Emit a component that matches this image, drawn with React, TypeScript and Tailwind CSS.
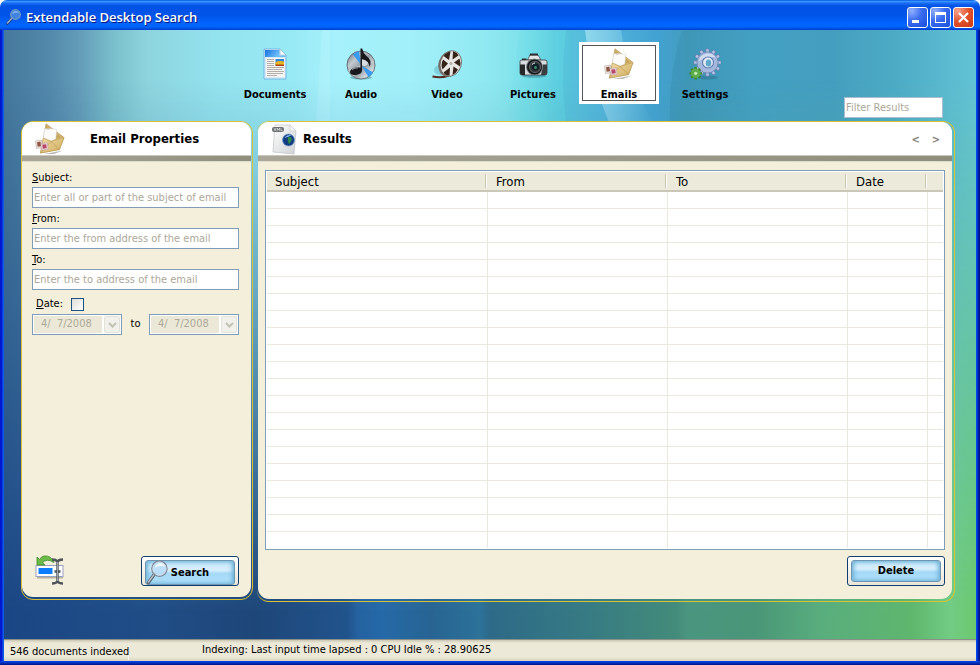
import type { ReactNode } from "react";

function Backdrop() {
  return (
    <svg
      className="col-start-1 row-start-1 h-full w-full"
      viewBox="4 30 972 609"
      preserveAspectRatio="none"
      aria-hidden="true"
    >
      <defs>
        <linearGradient id="sky" gradientUnits="userSpaceOnUse" x1="0" y1="0" x2="980" y2="0">
          <stop offset="0.004" stopColor="#45789c" />
          <stop offset="0.05" stopColor="#5389ab" />
          <stop offset="0.08" stopColor="#629bb8" />
          <stop offset="0.115" stopColor="#79bfcb" />
          <stop offset="0.15" stopColor="#8dd4de" />
          <stop offset="0.22" stopColor="#93e3ee" />
          <stop offset="0.3" stopColor="#98eaf5" />
          <stop offset="0.34" stopColor="#a6f1fb" />
          <stop offset="0.42" stopColor="#a2f0f9" />
          <stop offset="0.5" stopColor="#8fe8f1" />
          <stop offset="0.545" stopColor="#78dfe8" />
          <stop offset="0.575" stopColor="#58c4dc" />
          <stop offset="0.62" stopColor="#52b3dc" />
          <stop offset="0.67" stopColor="#42a2d2" />
          <stop offset="0.7" stopColor="#459dbd" />
          <stop offset="0.77" stopColor="#47a5c8" />
          <stop offset="0.85" stopColor="#459fc0" />
          <stop offset="0.91" stopColor="#4caac5" />
          <stop offset="0.995" stopColor="#62c2d5" />
        </linearGradient>
        <linearGradient id="ground" gradientUnits="userSpaceOnUse" x1="0" y1="0" x2="980" y2="0">
          <stop offset="0" stopColor="#1b4685" />
          <stop offset="0.16" stopColor="#204d86" />
          <stop offset="0.26" stopColor="#1e4679" />
          <stop offset="0.355" stopColor="#21548c" />
          <stop offset="0.365" stopColor="#2562a0" />
          <stop offset="0.39" stopColor="#2569a8" />
          <stop offset="0.44" stopColor="#276493" />
          <stop offset="0.49" stopColor="#2c7299" />
          <stop offset="0.5" stopColor="#2d6a88" />
          <stop offset="0.6" stopColor="#377b83" />
          <stop offset="0.69" stopColor="#438b7a" />
          <stop offset="0.7" stopColor="#4a957f" />
          <stop offset="0.77" stopColor="#4a9678" />
          <stop offset="0.84" stopColor="#59ae7d" />
          <stop offset="0.93" stopColor="#5fb66d" />
          <stop offset="0.97" stopColor="#72cc83" />
          <stop offset="1" stopColor="#6ac76b" />
        </linearGradient>
        <linearGradient id="fade" x1="0" y1="0" x2="0" y2="1">
          <stop offset="0.12" stopColor="#000" />
          <stop offset="0.45" stopColor="#666" />
          <stop offset="0.92" stopColor="#fff" />
        </linearGradient>
        <linearGradient id="ray" x1="0" y1="0" x2="1" y2="0">
          <stop offset="0" stopColor="#d8fbff" stopOpacity="0.45" />
          <stop offset="1" stopColor="#d8fbff" stopOpacity="0" />
        </linearGradient>
        <linearGradient id="edge" x1="0" y1="0" x2="1" y2="0">
          <stop offset="0" stopColor="#5ed4e2" stopOpacity="0" />
          <stop offset="1" stopColor="#5ed4e2" stopOpacity="0.6" />
        </linearGradient>
        <linearGradient id="shade" x1="0" y1="0" x2="1" y2="0">
          <stop offset="0" stopColor="#2f85a8" stopOpacity="0.3" />
          <stop offset="1" stopColor="#2f85a8" stopOpacity="0" />
        </linearGradient>
        <mask id="lower" maskUnits="userSpaceOnUse" x="0" y="0" width="980" height="665">
          <rect width="980" height="665" fill="url(#fade)" />
        </mask>
      </defs>
      <rect width="980" height="665" fill="url(#sky)" />
      <path d="M322 30h8v92h-14z" fill="#c8f8ff" opacity="0.25" />
      <path d="M520 30h46q-6 46 0 92h-60z" fill="url(#edge)" />
      <path d="M585 30q6 50 24 92h44q-24-40-32-92z" fill="url(#ray)" />
      <path d="M682 30q-14 44-12 92h190V30z" fill="url(#shade)" />
      <rect width="980" height="665" fill="url(#ground)" mask="url(#lower)" />
    </svg>
  );
}

function MagnifierIcon({ className }: { className: string }) {
  return (
    <svg className={className} viewBox="0 0 24 26" aria-hidden="true">
      <path d="M2.500 23.500 9 14.500" stroke="#5b6470" strokeWidth="3.400" strokeLinecap="round" />
      <path d="M2.500 23 8.500 15" stroke="#c3c9d2" strokeWidth="1.400" strokeLinecap="round" />
      <circle cx="14" cy="9" r="7.800" fill="#b8dcf8" fillOpacity="0.85" stroke="#7b8796" strokeWidth="1.600" />
      <path d="M9 8q1-4 5-5 5 0 6 4-6-2-11 1" fill="#eef8ff" />
      <circle cx="14" cy="9" r="7" fill="none" stroke="#dfe8f2" strokeWidth="0.800" />
    </svg>
  );
}

function TitleGlass() {
  return (
    <svg className="size-4" viewBox="0 0 16 16" aria-hidden="true">
      <path d="M1.500 14.500 6.500 8.500" stroke="#15317c" strokeWidth="2.600" strokeLinecap="round" />
      <path d="M1.500 14 6.500 8.500" stroke="#a9b8c8" strokeWidth="1.400" strokeLinecap="round" />
      <circle cx="9.500" cy="5.500" r="4.800" fill="#3f84e0" stroke="#7596c0" strokeWidth="1.300" />
      <path d="M6 5q1-3 4-3 2 0 3 2-4-1-7 1" fill="#7db2f2" />
    </svg>
  );
}

function DocumentIcon() {
  return (
    <svg className="size-8" viewBox="0 0 32 32" aria-hidden="true">
      <defs>
        <linearGradient id="docHead" x1="0" y1="0" x2="1" y2="0.400">
          <stop offset="0" stopColor="#1673dd" />
          <stop offset="1" stopColor="#6cbcf8" />
        </linearGradient>
      </defs>
      <path d="M5 1h16l6 6v24H5z" fill="#d5ebfa" stroke="#6aa9dc" strokeWidth="0.800" />
      <path d="M6 2h14.500v7H6z" fill="url(#docHead)" />
      <path d="M20 7.500h6.500V9H20z" fill="#6cbcf8" />
      <path d="M21 1v6h6z" fill="#fff" stroke="#8fb8d8" strokeWidth="0.700" />
      <path d="M7 10h18.500v19H7z" fill="#f7f5f2" />
      <path d="M8 11.500h7M8 13.500h7M8 15.500h7M8 17.500h7M8 19.500h17M8 21.500h15M8 23.500h17M8 25.500h16M8 27.500h10" stroke="#aaa6a4" strokeWidth="0.900" />
      <path d="M16.500 11H25v6.500h-8.500z" fill="#2f86d8" />
      <path d="M16.500 14q4-1.500 8.500-.5v4h-8.500z" fill="#e8b422" />
      <path d="M16.500 16.500H25v1.500h-8.500z" fill="#a8481b" />
    </svg>
  );
}

function AudioIcon() {
  return (
    <svg className="size-8" viewBox="0 0 32 32" aria-hidden="true">
      <defs>
        <linearGradient id="disc" x1="0" y1="0" x2="1" y2="1">
          <stop offset="0" stopColor="#59636c" />
          <stop offset="0.300" stopColor="#c3cad0" />
          <stop offset="0.550" stopColor="#8c959c" />
          <stop offset="0.800" stopColor="#d6dce1" />
          <stop offset="1" stopColor="#636c74" />
        </linearGradient>
      </defs>
      <ellipse cx="16" cy="29.500" rx="11" ry="2" fill="#4b8c98" opacity="0.5" />
      <circle cx="16" cy="17" r="14" fill="url(#disc)" stroke="#5d666e" strokeWidth="0.900" />
      <path d="M16 17 8 6.500q3-2.700 6-3.200zM16 17l7.500 12q3-2 4.500-4.500z" fill="#3b9af2" />
      <path d="M16 17 3 22q2 5 6 7zM16 17 26 8q3 3 3.500 7z" fill="#fff" opacity="0.300" />
      <circle cx="19.500" cy="14.500" r="4" fill="#d8dde1" stroke="#808890" strokeWidth="0.800" />
      <path d="M15.500.5h1.700q1 5 4.300 7.500 6 4 3 11 0-6-7.500-8v11.500q0 3.500-6 4.500-6 .500-6-3t5.500-4.500q2.500-.500 5 .3z" fill="#17191c" />
      <path d="M7 22q2-2.500 6-2" stroke="#8b9299" strokeWidth="1.100" fill="none" />
    </svg>
  );
}

function VideoIcon() {
  return (
    <svg className="size-8" viewBox="0 0 32 32" aria-hidden="true">
      <ellipse cx="9" cy="22" rx="6" ry="5" fill="#4c9aa8" opacity="0.350" />
      <path d="M1.500 28.500q9 2 16-1" stroke="#5a2b20" strokeWidth="2" fill="none" />
      <ellipse cx="18" cy="16" rx="10.500" ry="13" transform="rotate(18 18 16)" fill="#77716b" />
      <ellipse cx="19.800" cy="15.500" rx="10.500" ry="13" transform="rotate(18 19.800 15.500)" fill="#e8e6e2" stroke="#58524c" strokeWidth="0.700" />
      <g fill="#35231a">
        <path d="m18 12-5.500-4q3-4 7-4.500z" />
        <path d="m21.500 11.500.5-8q4 .5 5.500 4z" />
        <path d="m23 14.500 5.500-4q1.500 4 .5 8z" />
        <path d="m22.500 18.500 4.500 3q-2 4-5.500 5.500z" />
        <path d="m19 19.500-.5 8q-4 .5-6-3z" />
        <path d="m17 15.500-5.500 6q-2-5 .5-10z" />
      </g>
      <circle cx="20" cy="15.500" r="2.200" fill="#b8b4ae" stroke="#fff" strokeWidth="0.700" />
    </svg>
  );
}

function CameraIcon() {
  return (
    <svg className="size-8" viewBox="0 0 32 32" aria-hidden="true">
      <ellipse cx="17" cy="28" rx="12" ry="1.800" fill="#2f7f92" opacity="0.500" />
      <path d="M10.500 12 13 7h8l3 5z" fill="#e3e5e6" stroke="#4d5256" strokeWidth="0.800" />
      <path d="M12.500 7.500H21V5.500h-8z" fill="#2c2e30" />
      <path d="M3 13.500Q3 12 5 12h23q2 0 2 2v11q0 2-2 2H5q-2 0-2-2z" fill="#d9dcde" stroke="#3a3d40" strokeWidth="0.800" />
      <path d="M3 16.500h5V27H5q-2 0-2-2z" fill="#252729" />
      <path d="M26 16.500h4V25q0 2-2 2h-4z" fill="#3a3d40" />
      <path d="M5 12h4.500v-1.500H5z" fill="#2b2d2f" />
      <circle cx="17.500" cy="19" r="8" fill="#17191a" stroke="#82868a" strokeWidth="0.800" />
      <circle cx="18" cy="19" r="5.600" fill="#33383b" stroke="#696e72" strokeWidth="0.800" />
      <circle cx="18.500" cy="19" r="3.600" fill="#101f26" />
      <circle cx="18.500" cy="19.500" r="1.500" fill="#3c8d68" />
      <path d="M15 16.500q1.500-1.500 3-1.500" stroke="#e8f2f4" strokeWidth="1" fill="none" />
    </svg>
  );
}

function EmailIcon() {
  return (
    <svg className="size-8" viewBox="0 0 32 32" aria-hidden="true">
      <defs>
        <linearGradient id="paper" x1="0" y1="0" x2="1" y2="1">
          <stop offset="0" stopColor="#f0dca6" />
          <stop offset="1" stopColor="#d0ac5e" />
        </linearGradient>
      </defs>
      <path d="m10 31 19-3.500-9 3.500z" fill="#8f8b82" opacity="0.600" />
      <path d="M12 .8 30 14.500 25.500 26.500 6.500 30 9.500 15z" fill="#d9bb74" stroke="#a98a45" strokeWidth="0.600" />
      <path d="m12.200 2.500 15.300 11.800L17 17.500l-6.500-3z" fill="#c7a65d" />
      <path d="m10.500 6.300 2-.9 9.300.6 1 1-1 9-4.600 2L9.300 15z" fill="#fbfbf9" stroke="#cfcabd" strokeWidth="0.500" />
      <path d="M12.500 5.500q1.500 2 3 .3" stroke="#b9b4a8" strokeWidth="0.700" fill="none" />
      <path d="M9.300 15 17 18.500l13-4-4.500 12-19 3.500z" fill="url(#paper)" stroke="#b7964f" strokeWidth="0.500" />
      <path d="m17 18.500 8.500 8M17 18.500 6.500 30" stroke="#b7964f" strokeWidth="0.600" />
      <path d="m1.500 18 6-1 1 7.500-6 1z" fill="#f4ece6" stroke="#b3a49c" strokeWidth="0.600" />
      <path d="m3 19.200 3.500-.6.600 4.600-3.500.5z" fill="#8f5646" />
      <path d="m7 20.500 6.500-.5.500 6.500-6.500.5z" fill="#f6e7ea" stroke="#b899a0" strokeWidth="0.600" />
      <path d="m8.300 21.600 4-.3.400 4-4 .4z" fill="#b4476a" />
    </svg>
  );
}

function SettingsIcon() {
  const teeth = [0, 30, 60, 90, 120, 150, 180, 210, 240, 270, 300, 330];
  const small = [0, 45, 90, 135, 180, 225, 270, 315];
  return (
    <svg className="size-8" viewBox="0 0 32 32" aria-hidden="true">
      <ellipse cx="19" cy="29.500" rx="10" ry="2" fill="#2d6f8d" opacity="0.500" />
      <g fill="#b4c6e6" stroke="#5f79ab" strokeWidth="0.800">
        {teeth.map((a) => (
          <rect key={a} x="16.800" y="0.800" width="3.400" height="6" rx="0.800" transform={`rotate(${a} 18.500 14.500)`} />
        ))}
      </g>
      <circle cx="18.500" cy="14.500" r="10.600" fill="#a3b8dc" stroke="#6d85b2" strokeWidth="0.800" />
      <path d="M9.500 13.500q1-7 9-8 6 0 8 4-8-2-17 4" fill="#dbe5f5" opacity="0.800" />
      <circle cx="19" cy="14.500" r="6" fill="#5f79ad" />
      <circle cx="19" cy="14.500" r="4.900" fill="#e3eaf6" />
      <ellipse cx="19.500" cy="15" rx="2.800" ry="3.600" fill="#5fa9cb" />
      <g fill="#3c8a35">
        {small.map((a) => (
          <rect key={a} x="5.300" y="19" width="2.800" height="4" rx="0.600" transform={`rotate(${a} 6.700 25.300)`} />
        ))}
      </g>
      <circle cx="6.700" cy="25.300" r="4.700" fill="#5fae4b" />
      <circle cx="6.700" cy="25.300" r="1.600" fill="#c9ecc0" />
    </svg>
  );
}

function WebPageIcon() {
  return (
    <svg className="h-8 w-7" viewBox="0 0 28 32" aria-hidden="true">
      <defs>
        <linearGradient id="sheet" x1="0" y1="0" x2="1" y2="1">
          <stop offset="0" stopColor="#fff" />
          <stop offset="1" stopColor="#cfd2d3" />
        </linearGradient>
      </defs>
      <path d="m4 2 15 0 6 6-2 23-21-2z" fill="url(#sheet)" stroke="#bfc2c4" strokeWidth="0.700" />
      <path d="m19 2 0 6h6z" fill="#f4f5f5" stroke="#c9cccd" strokeWidth="0.600" />
      <rect x="1" y="4" width="12" height="5" rx="2" fill="#6e7173" />
      <path d="m3 5.200 2 2.600M5 5.200l-2 2.600M6.200 7.800V5.200l1.200 1.500 1.200-1.500v2.600M10 5.200v2.600h1.600" stroke="#fff" strokeWidth="0.600" fill="none" />
      <circle cx="17.500" cy="17" r="6" fill="#123c80" stroke="#6f9acb" strokeWidth="0.800" />
      <path d="M13.500 15q2-3.500 7-3-3 2-7 3" fill="#8fc1f0" />
      <path d="M17 14q3-1 4 2-1 4-3 5-2-3-1-7" fill="#2f8a4a" />
    </svg>
  );
}

function RenameIcon() {
  return (
    <svg className="size-8" viewBox="0 0 32 32" aria-hidden="true">
      <path d="M3 23h26v1.500H3z" fill="#8f8b7c" opacity="0.600" />
      <rect x="2" y="11.500" width="27" height="11" fill="#fff" stroke="#9aa2c4" />
      <rect x="4.500" y="14" width="14" height="6" fill="#0c7dff" />
      <path d="M3 3v8h8L8.500 8.500Q13 4 20 8.500q-3-7.500-10-6.500Q7 2.500 5.500 5.500z" fill="#6cba48" stroke="#3d8a2a" strokeWidth="0.800" />
      <path d="M18 5.500q4 0 5.500 2 1.500-2 5.500-2M23.500 7.500v20M18 29.500q4 0 5.500-2 1.500 2 5.500 2M20.500 17.500h6" fill="none" stroke="#4f5459" strokeWidth="2.400" />
      <path d="M23.500 8v19" stroke="#a9aeb3" strokeWidth="0.900" />
    </svg>
  );
}

const tabs: { label: string; icon: ReactNode; active?: boolean }[] = [
  { label: "Documents", icon: <DocumentIcon /> },
  { label: "Audio", icon: <AudioIcon /> },
  { label: "Video", icon: <VideoIcon /> },
  { label: "Pictures", icon: <CameraIcon /> },
  { label: "Emails", icon: <EmailIcon />, active: true },
  { label: "Settings", icon: <SettingsIcon /> },
];

const columns = ["Subject", "From", "To", "Date", ""];
const emptyRows = Array.from({ length: 20 }, (_, i) => i);

function TitleBar() {
  const box = "flex size-[21px] items-center justify-center rounded-[3px] border border-white";
  const blue = "bg-[radial-gradient(circle_at_20%_15%,#8fb0ff,#3a6cf0_45%,#1a4fd8)]";
  return (
    <header className="flex h-[30px] items-center rounded-t-[7px] bg-[linear-gradient(180deg,#0058e6_0%,#3b93ff_5%,#1b6ff5_10%,#0052e4_20%,#0054e8_50%,#0066ff_82%,#0063fa_90%,#003dcc_100%)] pt-1 pr-1.5 pl-1.5">
      <TitleGlass />
      <h1 className="ml-1 flex-1 font-['Open_Sans','Noto_Sans',sans-serif] text-[13px] leading-4 font-semibold text-white [text-shadow:1px_1px_#0a1883]">
        Extendable Desktop Search
      </h1>
      <div className="flex gap-0.5">
        <button aria-label="Minimize" className={`${box} ${blue}`}>
          <svg className="size-[19px]" viewBox="0 0 19 19"><path d="M4 12h7v3H4z" fill="#fff" /></svg>
        </button>
        <button aria-label="Maximize" className={`${box} ${blue}`}>
          <svg className="size-[19px]" viewBox="0 0 19 19"><path d="M4 4h11v11H4zM5 7v7h9V7z" fill="#fff" fillRule="evenodd" /></svg>
        </button>
        <button aria-label="Close" className={`${box} bg-[radial-gradient(circle_at_20%_15%,#f5a58c,#e0512c_50%,#cc3a12)]`}>
          <svg className="size-[19px]" viewBox="0 0 19 19"><path d="m5 5 9 9M14 5l-9 9" stroke="#fff" strokeWidth="2.200" /></svg>
        </button>
      </div>
    </header>
  );
}

function PanelHeader({ children }: { children: ReactNode }) {
  return (
    <div className="bg-white">
      <div className="flex h-[33px] items-center">{children}</div>
      <div className="h-[7px] border-t border-b border-t-[#c9c8c0] border-b-[#dddccf] bg-linear-to-r from-[#aaa798] to-[#8f8e7d]" />
    </div>
  );
}

function Field({ id, accessKey, rest, hint }: { id: string; accessKey: string; rest: string; hint: string }) {
  return (
    <div className="flex flex-col gap-0.5">
      <label htmlFor={id} className="leading-[14px]">
        <u>{accessKey}</u>
        {rest}:
      </label>
      <input
        id={id}
        placeholder={hint}
        className="h-[21px] w-full border border-[#7f9db9] bg-white px-px placeholder:text-[#aca899] outline-none"
      />
    </div>
  );
}

function DateSelect({ label }: { label: string }) {
  return (
    <div className="grid h-[21px] w-[90px] border border-[#7f9db9] bg-white p-px">
      <select
        disabled
        aria-label={label}
        className="col-start-1 row-start-1 mr-[18px] appearance-none bg-[#ebe8d7] pl-[7px] text-[#aca899] opacity-100"
      >
        <option>{"4/\u00a0 7/2008"}</option>
      </select>
      <span className="pointer-events-none col-start-1 row-start-1 flex w-4 items-center justify-center justify-self-end rounded-xs border border-[#e3e2d9] bg-[#f1f0ea]">
        <svg className="h-[6px] w-[9px]" viewBox="0 0 9 6" aria-hidden="true">
          <path d="m1 1 3.500 3.500L8 1" fill="none" stroke="#c2c1b4" strokeWidth="2" />
        </svg>
      </span>
    </div>
  );
}

function GlossButton({ icon, children }: { icon?: ReactNode; children: ReactNode }) {
  return (
    <button className="grid h-[30px] w-[98px] rounded-[3px] border border-[#123f70] bg-linear-to-b from-white to-[#e9e6d8] p-[3px] text-[11px] font-bold">
      <span className="col-start-1 row-start-1 rounded-[3px] border border-[#6f96b0] bg-[linear-gradient(180deg,#c3e6f8_0%,#d8effc_40%,#a3d8f6_55%,#b2e2fa_100%)] shadow-[inset_2px_0_4px_#6fb3da,inset_-2px_0_4px_#6fb3da]" />
      {icon && <span className="col-start-1 row-start-1 self-center justify-self-start">{icon}</span>}
      <span className="col-start-1 row-start-1 self-center leading-4">{children}</span>
    </button>
  );
}

function SearchPanel() {
  return (
    <section className="mb-0.5 flex w-[232px] shrink-0 rounded-xl border border-[#dcc233] pr-px pb-0.5">
      <form className="flex flex-1 flex-col overflow-hidden rounded-[11px] bg-[#f4efda]" onSubmit={(e) => e.preventDefault()}>
        <PanelHeader>
          <span className="ml-3"><EmailIcon /></span>
          <h2 className="ml-6 text-[13px] leading-4 font-bold">Email Properties</h2>
        </PanelHeader>
        <div className="flex flex-1 flex-col pt-[9px] pr-3 pb-[11px] pl-2.5">
          <div className="flex flex-col gap-1">
            <Field id="subject" accessKey="S" rest="ubject" hint="Enter all or part of the subject of email" />
            <Field id="from" accessKey="F" rest="rom" hint="Enter the from address of the email" />
            <Field id="to" accessKey="T" rest="o" hint="Enter the to address of the email" />
          </div>
          <div className="mt-[7px] flex items-center gap-2 pl-1">
            <label htmlFor="useDate" className="leading-[14px]">
              <u>D</u>ate:
            </label>
            <input
              id="useDate"
              type="checkbox"
              className="size-[13px] appearance-none border border-[#1c5180] bg-linear-to-br from-[#dcdcd7] to-white"
            />
          </div>
          <div className="mt-[3px] flex items-center justify-between">
            <DateSelect label="From date" />
            <span>to</span>
            <DateSelect label="To date" />
          </div>
          <div className="mt-auto flex items-end justify-between pl-0.5">
            <button type="button" aria-label="Rename"><RenameIcon /></button>
            <GlossButton icon={<MagnifierIcon className="size-[25px]" />}>Search</GlossButton>
          </div>
        </div>
      </form>
    </section>
  );
}

function ResultsPanel() {
  return (
    <section className="flex min-w-0 flex-1 rounded-xl border border-l-0 border-[#dcc233] pr-0.5 pb-0.5 pl-px">
      <div className="flex min-w-0 flex-1 flex-col overflow-hidden rounded-[11px] bg-[#f4efda]">
        <PanelHeader>
          <span className="ml-[13px]"><WebPageIcon /></span>
          <h2 className="ml-1 flex-1 text-[13px] leading-4 font-bold">Results</h2>
          <div className="flex gap-3 pt-1 pr-3 font-bold text-[#85847a]">
            <button aria-label="Previous">&lt;</button>
            <button aria-label="Next">&gt;</button>
          </div>
        </PanelHeader>
        <div className="flex flex-1 flex-col gap-1.5 px-[7px] pt-2 pb-[13px]">
          <div className="flex-1 border border-[#7f9db9] bg-white p-px">
            <table className="h-full w-full table-fixed border-separate border-spacing-0">
              <colgroup>
                <col className="w-[221px]" />
                <col className="w-[180px]" />
                <col className="w-[180px]" />
                <col className="w-[80px]" />
                <col />
              </colgroup>
              <thead>
                <tr className="h-5">
                  {columns.map((name) => (
                    <th
                      key={name}
                      scope="col"
                      className="border-b-2 border-[#cbc7b8] bg-[#ebeadb] p-0 pr-0.5 text-left text-[13px] leading-4 font-normal last:pr-0"
                    >
                      <span className={name ? "block h-3.5 border-r border-[#c7c5b2] pl-2 shadow-[1px_0_#fff]" : "block h-3.5"}>
                        {name}
                      </span>
                    </th>
                  ))}
                </tr>
              </thead>
              <tbody>
                {emptyRows.map((row) => (
                  <tr key={row} className="h-[17px]">
                    {columns.map((name) => (
                      <td key={name} className="border-r border-b border-[#ebe9db] p-0 last:border-r-0" />
                    ))}
                  </tr>
                ))}
                <tr className="h-4">
                  {columns.map((name) => (
                    <td key={name} className="border-r border-[#ebe9db] p-0 last:border-r-0" />
                  ))}
                </tr>
              </tbody>
            </table>
          </div>
          <div className="flex justify-end">
            <GlossButton>Delete</GlossButton>
          </div>
        </div>
      </div>
    </section>
  );
}

export default function App() {
  return (
    <div className="flex min-h-screen flex-col font-['DejaVu_Sans_Condensed','Noto_Sans',sans-serif] text-[11px] text-black">
      <TitleBar />
      <div className="flex flex-1 flex-col bg-[linear-gradient(90deg,#0018cf_0,#0018cf_2px,#1266f0_3px,#0a50e0_4px,#0040e0_50%,#0046f0_calc(100%-3px),#001fa8_calc(100%-2px),#00107e_100%)] px-1">
        <main className="grid flex-1">
          <Backdrop />
          <div className="z-10 col-start-1 row-start-1 flex flex-col">
            <div className="grid h-[91px] grid-cols-[1fr_auto_1fr] pt-3">
              <nav className="col-start-2 flex gap-1.5 self-start">
                {tabs.map((tab) => (
                  <button
                    key={tab.label}
                    className={`h-[62px] w-20 p-[3px] font-bold ${tab.active ? "bg-white" : ""}`}
                  >
                    <span
                      className={`flex h-full flex-col items-center justify-between border pt-0.5 leading-[11px] ${tab.active ? "border-[#55555a]" : "border-transparent"}`}
                    >
                      {tab.icon}
                      {tab.label}
                    </span>
                  </button>
                ))}
              </nav>
              <input
                aria-label="Filter Results"
                placeholder="Filter Results"
                className="mr-[33px] mb-[3px] h-[21px] w-[99px] self-end justify-self-end border border-[#a9bfd0] bg-white px-px placeholder:text-[#aca899] outline-none"
              />
            </div>
            <div className="flex flex-1 gap-1 pr-[21px] pb-[37px] pl-[17px]">
              <SearchPanel />
              <ResultsPanel />
            </div>
          </div>
        </main>
        <footer className="flex h-[22px] border-t border-[#8a8f88] bg-[linear-gradient(180deg,#c9c6b4_0,#ece9d8_3px,#ece9d8_80%,#d8d4bf_100%)] pl-1.5 whitespace-nowrap">
          <span className="mt-1 h-4 w-[119px] border-r border-[#f8f7f0] leading-4">546 documents indexed</span>
          <span className="ml-[73px] mt-0.5 leading-4">Indexing: Last input time lapsed : 0 CPU Idle % : 28.90625</span>
        </footer>
      </div>
      <div className="h-1 bg-linear-to-b from-[#0a48e8] to-[#00138c]" />
    </div>
  );
}
